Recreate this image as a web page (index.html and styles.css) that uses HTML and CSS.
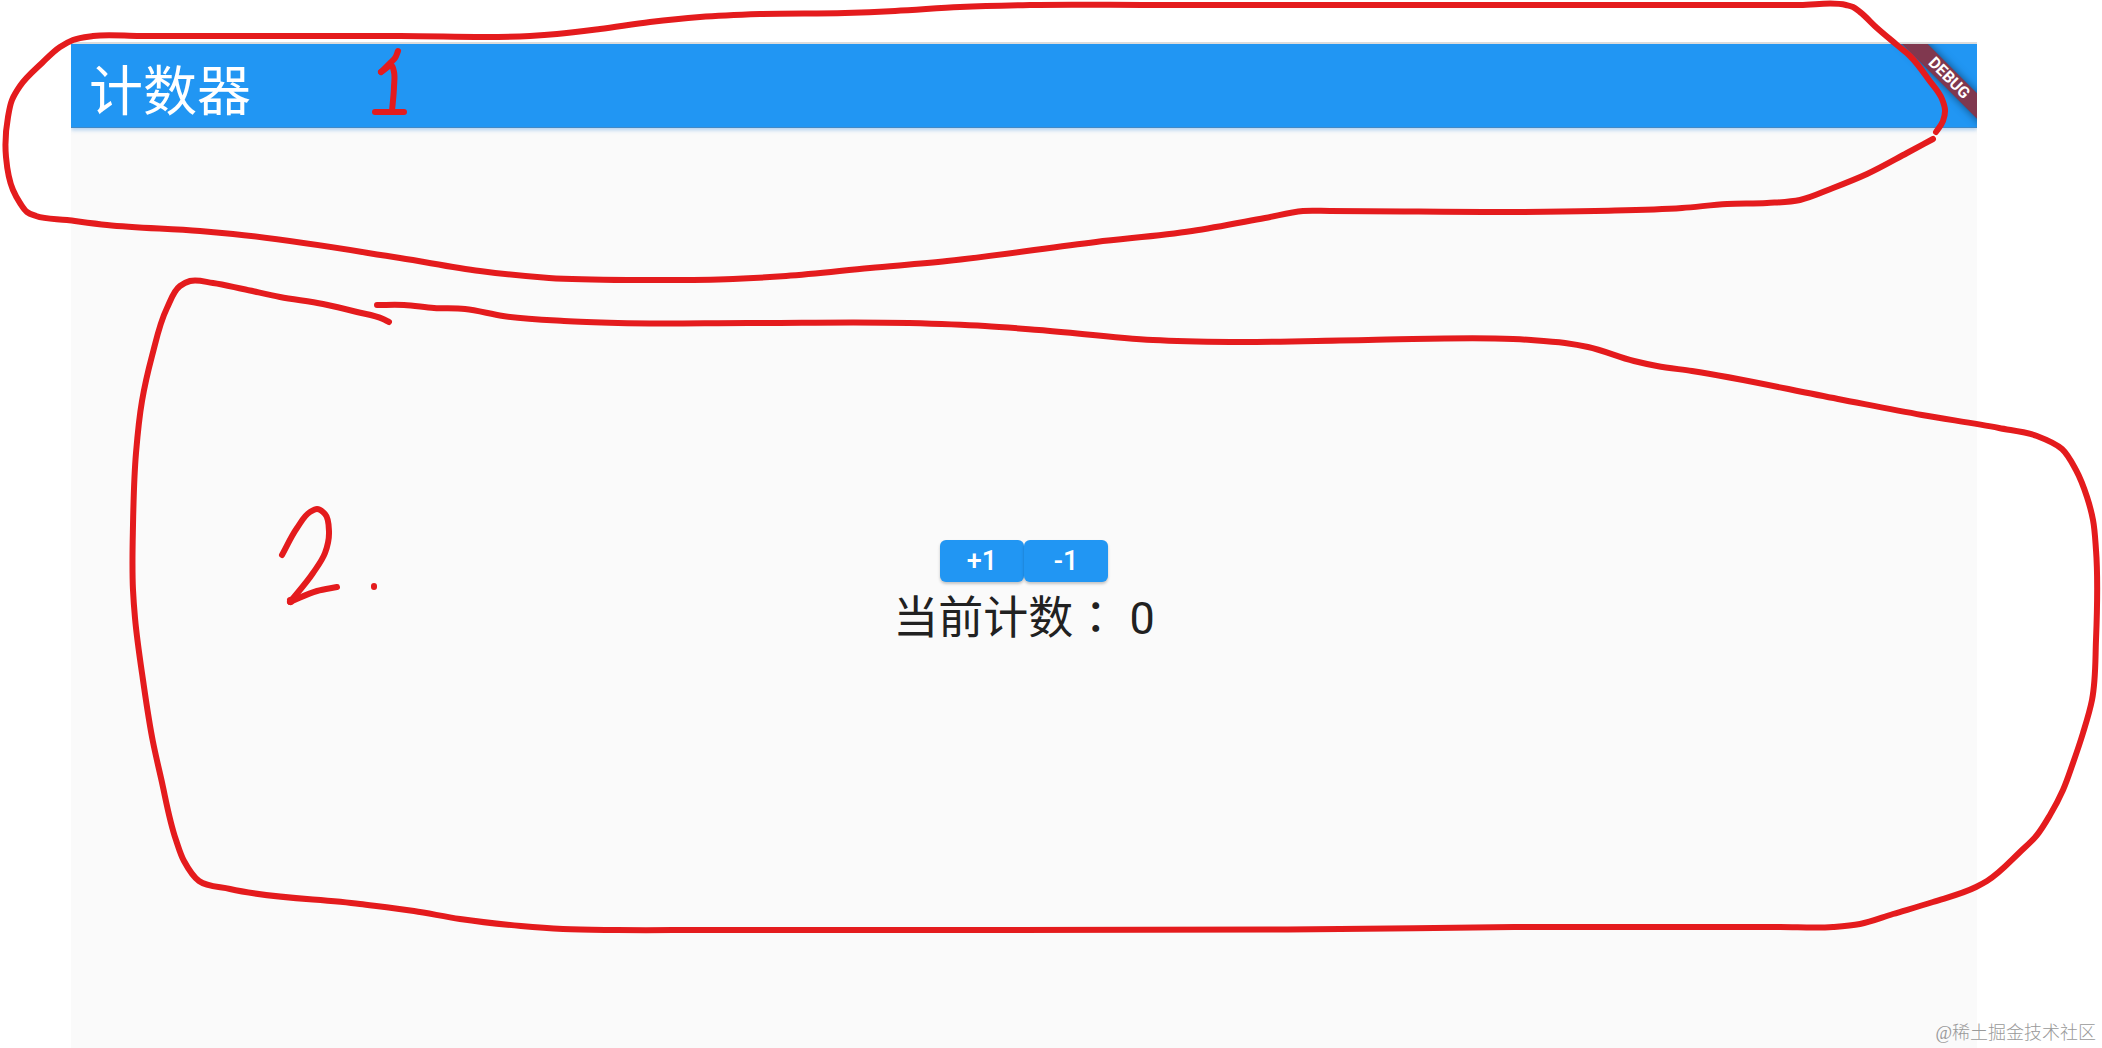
FILE: index.html
```html
<!DOCTYPE html>
<html lang="zh-CN">
<head>
<meta charset="utf-8">
<meta name="viewport" content="width=device-width, initial-scale=1">
<title>计数器</title>
<link rel="stylesheet" href="styles.css">
</head>
<body>
<div class="app">
  <header class="app-bar">
    <h1 class="app-title">计数器</h1>
    <div class="banner-clip"><span class="banner">DEBUG</span></div>
  </header>
  <main class="content">
    <div class="buttons">
      <button class="button" type="button" data-step="1">+1</button>
      <button class="button" type="button" data-step="-1">-1</button>
    </div>
    <p class="counter">当前计数<span class="colon" lang="zh-TW">：</span> <output id="count">0</output></p>
  </main>
</div>

<svg class="notes" viewBox="0 0 2102 1048" aria-hidden="true">
  <!-- loop around the app bar -->
  <path data-points="1936,132 1943,121 1945,110 1942,99 1929,80 1910,56 1897,45 1877,28 1860,12 1853,7 1846,5 1800,5 1150,5 1030,5 960,7 895,11 845,13 760,14 700,17 650,22 600,29 557,34 530,36 400,36 140,36 93,36 73,40 60,47 42,63 20,86 12,100 8,117 6,157 13,190 20,203 27,212 36,216 67,220 107,225 200,231 233,234 400,258 480,271 549,278 641,280 733,279 786,276 870,268 947,261 1096,242 1192,231 1265,218 1303,211 1330,211 1595,211 1682,208 1727,204 1767,203 1800,200 1833,188 1867,174 1907,153 1933,139"/>
  <!-- loop around the content -->
  <path data-points="377,305 404,305 434,308 465,309 503,316 564,321 618,323 748,323 909,323 985,326 1039,330 1153,340 1230,342 1368,340 1513,339 1531,340 1565,343 1588,347 1634,361 1657,366 1692,371 1838,399 1922,415 1999,428 2037,436 2062,449 2076,470 2087,497 2093,520 2096,550 2096,640 2092,700 2083,733 2073,763 2063,790 2050,815 2037,835 2020,852 1987,881 1976,887 1933,902 1893,914 1860,924 1833,927 1780,927 1600,927 1528,927 1340,929 700,930 617,930 563,929 521,926 460,919 414,911 360,904 230,889 199,881 184,861 176,840 161,778 153,742 143,680 135,618 133,590 133,525 136,453 142,401 152,356 167,308 180,286 190,281 213,283 243,289 280,297 323,304 357,312 383,319 389,322"/>
  <!-- mark beside the title -->
  <path data-points="398,51 395,58 390,63 381,72"/>
  <path data-points="381,72 392,66 394,72 394,87 392,111"/>
  <path data-points="375,112 404,112"/>
  <!-- mark beside the content -->
  <path data-points="282,555 297,528 310,512 317,509 325,514 329,532 325,553 313,573 290,602"/>
  <path data-points="290,602 317,591 337,587"/>
  <path data-points="290,600 291,602"/>
  <path data-points="374,586 374,587"/>
</svg>

<p class="watermark">@稀土掘金技术社区</p>
<script src="script.js"></script>
</body>
</html>
```
FILE: styles.css
```css
* {
  box-sizing: border-box;
}

body {
  margin: 0;
  position: relative;
  min-height: 100vh;
  display: flex;
  padding: 42px 125px 0 71px;
  background: #fff;
  font-family: Roboto, "Noto Sans CJK SC", sans-serif;
}

.app {
  flex: 1;
  display: flex;
  flex-direction: column;
  border-top: 2px solid #dcdcdc;
  background: #fafafa;
}

.app-bar {
  position: relative;
  display: flex;
  align-items: center;
  height: 84px;
  padding: 14px 18px 0;
  background: #2196f3;
  border-bottom: 1px solid #4289c6;
  box-shadow: 0 2px 4px rgba(33, 130, 220, 0.35);
  clip-path: inset(0 0 -12px 0);
}

.app-title {
  margin: 0;
  color: #fff;
  font-size: 54px;
  line-height: 64px;
  font-weight: 400;
}

.banner-clip {
  position: absolute;
  top: 0;
  right: 0;
  width: 100px;
  height: 90px;
  overflow: hidden;
}

.banner {
  position: absolute;
  top: 25px;
  right: -52px;
  width: 160px;
  height: 18px;
  transform: rotate(45deg);
  background: #80384f;
  box-shadow: 0 0 8px rgba(0, 0, 0, 0.5);
  color: #fff;
  font-size: 16px;
  line-height: 18px;
  font-weight: 700;
  text-align: center;
}

.content {
  flex: 1;
  display: flex;
  flex-direction: column;
  align-items: center;
  justify-content: center;
  gap: 7px;
  padding-top: 8px;
}

.buttons {
  display: flex;
}

.button {
  width: 84px;
  height: 42px;
  padding: 0;
  border: 0;
  border-radius: 6px;
  background: #2196f3;
  box-shadow: 0 2px 3px rgba(0, 0, 0, 0.22);
  color: #fff;
  font-family: inherit;
  font-size: 27px;
  font-weight: 500;
  cursor: pointer;
}

.counter {
  margin: 0;
  color: #212121;
  font-size: 45px;
  line-height: 52px;
}

.colon {
  font-family: "Noto Sans CJK TC", sans-serif;
}

.notes {
  position: absolute;
  inset: 0;
  width: 100%;
  height: 100%;
  pointer-events: none;
  fill: none;
  stroke: #e41b1d;
  stroke-width: 6px;
  stroke-linecap: round;
  stroke-linejoin: round;
}

.watermark {
  position: absolute;
  right: 6px;
  bottom: 3px;
  margin: 0;
  color: #999;
  font-family: "Liberation Serif", "Noto Sans CJK SC", serif;
  font-size: 18px;
  line-height: 24px;
  font-weight: 300;
}
```
FILE: script.js
```js
// Unit direction and length of the segment from a to b.
function segment(a, b) {
  const length = Math.hypot(b[0] - a[0], b[1] - a[1]);
  const scale = length || 1;
  return { length, x: (b[0] - a[0]) / scale, y: (b[1] - a[1]) / scale };
}

// Direction of the curve at a point; the shorter neighbouring segment counts for more.
function tangent(before, point, after) {
  const s1 = segment(before, point);
  const s2 = segment(point, after);
  const x = s1.x * s2.length + s2.x * s1.length;
  const y = s1.y * s2.length + s2.y * s1.length;
  const total = s1.length + s2.length || 1;
  return [x / total, y / total];
}

// Draws each pen stroke as a smooth curve through its recorded points.
function smoothPath(points) {
  const last = points.length - 1;
  const tangents = points.map((p, i) => {
    if (i === 0 || i === last) {
      const s = i === 0 ? segment(p, points[1]) : segment(points[i - 1], p);
      return [s.x, s.y];
    }
    return tangent(points[i - 1], p, points[i + 1]);
  });
  let d = `M${points[0]}`;
  for (let i = 0; i < last; i++) {
    const a = points[i];
    const b = points[i + 1];
    const reach = segment(a, b).length / 3;
    const c1 = [a[0] + tangents[i][0] * reach, a[1] + tangents[i][1] * reach];
    const c2 = [b[0] - tangents[i + 1][0] * reach, b[1] - tangents[i + 1][1] * reach];
    d += `C${c1} ${c2} ${b}`;
  }
  return d;
}

document.querySelectorAll('[data-points]').forEach(path => {
  const points = path.dataset.points.split(' ').map(p => p.split(',').map(Number));
  path.setAttribute('d', smoothPath(points));
});

const count = document.getElementById('count');
document.querySelectorAll('[data-step]').forEach(button => {
  button.addEventListener('click', () => {
    count.textContent = Number(count.textContent) + Number(button.dataset.step);
  });
});
```
